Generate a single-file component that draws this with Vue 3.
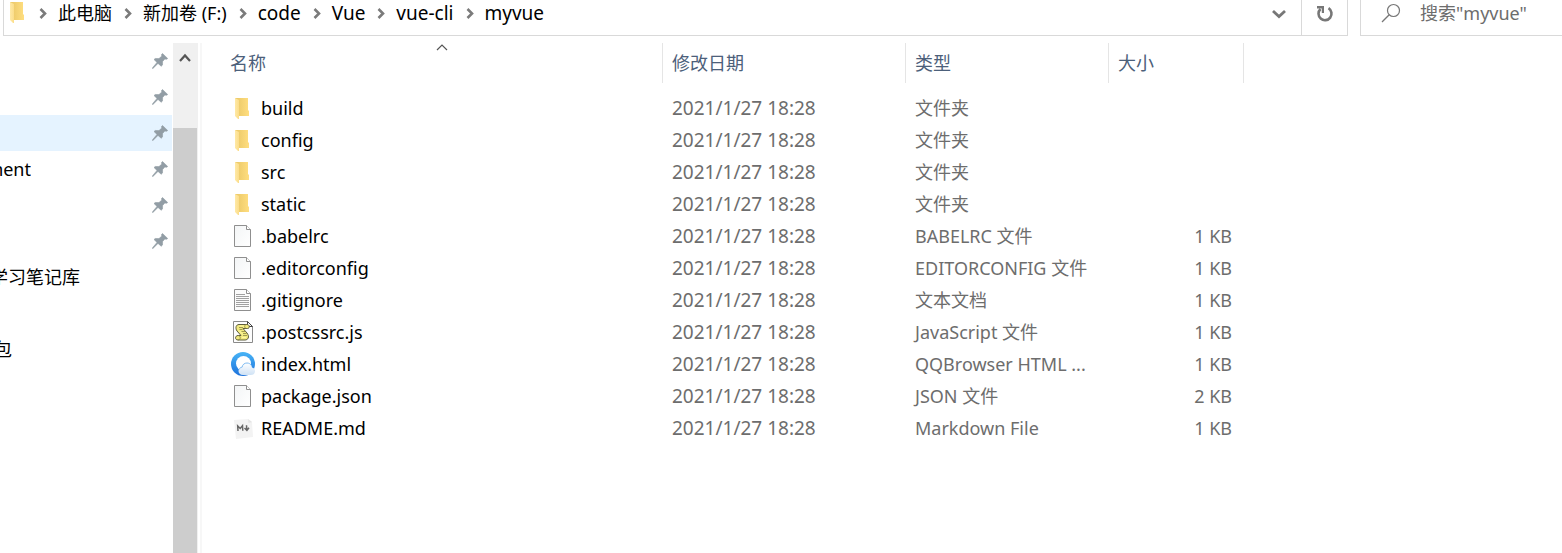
<script setup>
const crumbs = ['此电脑', '新加卷 (F:)', 'code', 'Vue', 'vue-cli', 'myvue']
const isLatin = (text) => /^[a-z-]+$/i.test(text)

const shortcuts = [
  { pinned: true },
  { pinned: true },
  { pinned: true, active: true },
  { label: 'ment', pinned: true, end: 'end-short' },
  { pinned: true },
  { pinned: true },
  { label: '学习笔记库', end: 'end-long' },
  {},
  { label: '包', end: 'end-tiny' },
]

const date = '2021/1/27 18:28'
const files = [
  { name: 'build', icon: 'folder', type: '文件夹', size: '' },
  { name: 'config', icon: 'folder', type: '文件夹', size: '' },
  { name: 'src', icon: 'folder', type: '文件夹', size: '' },
  { name: 'static', icon: 'folder', type: '文件夹', size: '' },
  { name: '.babelrc', icon: 'file', type: 'BABELRC 文件', size: '1 KB' },
  { name: '.editorconfig', icon: 'file', type: 'EDITORCONFIG 文件', size: '1 KB' },
  { name: '.gitignore', icon: 'text', type: '文本文档', size: '1 KB' },
  { name: '.postcssrc.js', icon: 'script', type: 'JavaScript 文件', size: '1 KB' },
  { name: 'index.html', icon: 'browser', type: 'QQBrowser HTML ...', size: '1 KB' },
  { name: 'package.json', icon: 'file', type: 'JSON 文件', size: '2 KB' },
  { name: 'README.md', icon: 'markdown', type: 'Markdown File', size: '1 KB' },
]
</script>

<template>
  <div class="explorer">
    <svg class="defs" width="0" height="0" aria-hidden="true">
      <defs>
        <linearGradient id="flap" x1="0" x2="1"><stop offset="0" stop-color="#ffe9a6" /><stop offset="1" stop-color="#fbdd8a" /></linearGradient>
        <linearGradient id="back" x1="0" x2="1"><stop offset="0" stop-color="#e9c665" /><stop offset="1" stop-color="#ffde80" /></linearGradient>
        <linearGradient id="paper" x1="0" y1="0" x2="1" y2="1"><stop offset="0" stop-color="#f3f5f6" /><stop offset="1" stop-color="#ffffff" /></linearGradient>
        <linearGradient id="ring" x1="0" y1="0" x2="0" y2="1"><stop offset="0" stop-color="#48b4f6" /><stop offset="1" stop-color="#1d72dc" /></linearGradient>
        <linearGradient id="cloud" x1="0" y1="0" x2="0" y2="1"><stop offset="0" stop-color="#ffffff" /><stop offset="1" stop-color="#cfe2f5" /></linearGradient>
        <symbol id="i-folder" viewBox="0 0 24 24">
          <path d="M4 2h13v12l1 1v5H7z" fill="url(#back)" />
          <path d="M4 2l4 2v19l-1 0-3-3z" fill="url(#flap)" />
        </symbol>
        <symbol id="i-file" viewBox="0 0 24 24">
          <path d="M3.500 1.500h12l4 4v17h-16z" fill="url(#paper)" stroke="#8f8f8f" />
          <path d="M15.500 1.500v4h4" fill="#fff" stroke="#8f8f8f" />
        </symbol>
        <symbol id="i-text" viewBox="0 0 24 24">
          <path d="M3.500 1.500h12l4 4v17h-16z" fill="#fbfbfb" stroke="#8f8f8f" />
          <path d="M15.500 1.500v4h4" fill="#fff" stroke="#8f8f8f" />
          <path d="M5 6.500h9M5 8.500h13M5 10.500h13M5 12.500h13M5 14.500h13M5 16.500h13M5 18.500h13" stroke="#a0a0a0" />
        </symbol>
        <symbol id="i-script" viewBox="0 0 24 24">
          <path d="M2.500 1.500h14l5 5v16h-19z" fill="#fdfdfd" stroke="#8a8a8a" />
          <path d="M16.500 1.500v5h5z" fill="#fff" stroke="#444" />
          <path d="M8 4.500h8c3 0 3 4 .5 4h-4.500l4 4.500c3 4 1 7-2 7H7c-3.500 0-3-4.500 0-4.500h3l-4-4.500c-2-3-1-6.500 2-6.500z" fill="#f2ea80" stroke="#5d5c3c" />
          <path d="M16 4.500c-3-.5-3 4-.5 4M7 15.500c3 0 3 4.500 0 4.500M8 7.500h4M8.500 9.500h3M10.500 11.500h4M12 13.500h3.500M12 15.500h4" fill="none" stroke="#8a8742" stroke-width=".8" />
          <path d="M8.500 6h4M11 17.500h4M8 10.500l4 4" stroke="#fff8a1" />
        </symbol>
        <symbol id="i-browser" viewBox="0 0 24 24">
          <circle cx="12" cy="12" r="12" fill="url(#ring)" />
          <circle cx="12.500" cy="11.500" r="7.500" fill="#fff" />
          <path d="M12 23c-3 0-4.500-1.800-4.500-4 0-2 1.600-3.700 3.600-3.800C11.500 12.500 13.500 11 16 11c2.700 0 4.600 1.800 5 4.400 2 .4 3.200 2 3 4-.2 2.200-2 3.600-4.200 3.600z" fill="url(#cloud)" />
          <path d="M8 17.500c.6-1.400 1.700-2.200 3.100-2.300C11.500 12.500 13.500 11 16 11c2 0 3.700 1 4.500 2.700" fill="none" stroke="#7fbcf2" />
        </symbol>
        <symbol id="i-markdown" viewBox="0 0 24 24">
          <path d="M3 4l14-1 4 3 1 15-17 2z" fill="#f3f3f3" />
          <path d="M17 3l.5 4 3.500-1z" fill="#e4e4e4" />
          <path d="M7 15l-.3-5 2.500 2.500L11.500 9.700l.3 5" fill="none" stroke="#666" stroke-width="1.500" />
          <path d="M15.500 9.300l.3 4.500M13.500 12l2.400 2.300L18 11.700" fill="none" stroke="#666" stroke-width="1.500" />
        </symbol>
        <symbol id="i-pin" viewBox="0 0 16 16">
          <path d="M10.500 0.500L15.700 5.500L14.500 6.300L12.800 6L10.600 8.500L10.500 12L9.200 13.300L6 10.400L1.200 15.200L0.400 15.500L.6 14.700L5 9.400L2 6.500L3.300 5.500L7 5.600L9.800 3L9.500 1.500z" fill="#929da5" stroke="#929da5" stroke-width=".6" />
        </symbol>
      </defs>
    </svg>

    <header class="toolbar">
      <div class="address">
        <svg class="lead-folder" viewBox="0 0 24 24" aria-hidden="true"><use href="#i-folder" /></svg>
        <nav class="crumbs" aria-label="路径">
          <template v-for="crumb in crumbs" :key="crumb">
            <svg class="sep" viewBox="0 0 8 11" aria-hidden="true"><path d="M1.500 1l4.500 4.500-4.500 4.500" fill="none" stroke="#7b7b7b" stroke-width="2.600" /></svg>
            <button class="crumb" :class="{ latin: isLatin(crumb) }" type="button">{{ crumb }}</button>
          </template>
        </nav>
        <button class="history" type="button" aria-label="历史记录">
          <svg width="14" height="10" viewBox="0 0 14 10"><path d="M1 2l6 5.500L13 2" fill="none" stroke="#777" stroke-width="2.800" /></svg>
        </button>
        <button class="refresh" type="button" aria-label="刷新">
          <svg width="18" height="18" viewBox="0 0 18 18">
            <path d="M12.500 3.200A6.500 6.500 0 1 1 4.500 4" fill="none" stroke="#777" stroke-width="2.600" />
            <path d="M1 1h7v7H5.800V3.500H1z" fill="#777" />
          </svg>
        </button>
      </div>
      <label class="search">
        <svg width="20" height="20" viewBox="0 0 20 20" aria-hidden="true"><circle cx="12.500" cy="7.500" r="6" fill="none" stroke="#777" stroke-width="1.200" /><path d="M8.200 11.800L1 19" stroke="#777" stroke-width="1.300" /></svg>
        <input type="text" aria-label="搜索" placeholder='搜索"myvue"' />
      </label>
    </header>

    <div class="body">
      <aside class="sidebar">
        <ul class="shortcuts">
          <li v-for="(item, i) in shortcuts" :key="i" :class="{ active: item.active }">
            <span v-if="item.label" class="shortcut" :class="item.end">{{ item.label }}</span>
            <svg v-if="item.pinned" class="pin" viewBox="0 0 16 16" aria-hidden="true"><use href="#i-pin" /></svg>
          </li>
        </ul>
      </aside>
      <div class="scrollbar">
        <button class="scroll-up" type="button" aria-label="向上滚动">
          <svg width="12" height="10" viewBox="0 0 12 10"><path d="M1 8l5-5.500L11 8" fill="none" stroke="#555" stroke-width="2.200" /></svg>
        </button>
        <div class="thumb"></div>
      </div>

      <main class="listing">
        <table>
          <colgroup>
            <col class="c-name" /><col class="c-date" /><col class="c-type" /><col class="c-size" /><col />
          </colgroup>
          <thead>
            <tr>
              <th class="name-head">
                <svg class="sort" width="12" height="7" viewBox="0 0 12 7" aria-hidden="true"><path d="M1 6l5-5 5 5" fill="none" stroke="#555" stroke-width="1.200" /></svg>
                <button type="button">名称</button>
              </th>
              <th><button type="button">修改日期</button></th>
              <th><button type="button">类型</button></th>
              <th><button type="button">大小</button></th>
              <th></th>
            </tr>
          </thead>
          <tbody>
            <tr v-for="file in files" :key="file.name">
              <td class="name">
                <div class="name-box">
                  <svg class="icon" viewBox="0 0 24 24" aria-hidden="true"><use :href="'#i-' + file.icon" /></svg>
                  <span>{{ file.name }}</span>
                </div>
              </td>
              <td class="date">{{ date }}</td>
              <td>{{ file.type }}</td>
              <td class="size">{{ file.size }}</td>
              <td></td>
            </tr>
          </tbody>
        </table>
      </main>
    </div>
  </div>
</template>

<style>
body {
  background: #fff;
}
</style>

<style scoped>
.explorer {
  display: flex;
  flex-direction: column;
  min-height: 100vh;
  font-family: "Noto Sans", "Noto Sans CJK SC", sans-serif;
  font-size: 18px;
  line-height: 26px;
  color: #000;
}
.defs {
  position: absolute;
}
button {
  font: inherit;
  color: inherit;
  background: none;
  border: 0;
  padding: 0;
}
.toolbar {
  display: flex;
  gap: 12px;
  padding-left: 3px;
}
.address {
  box-sizing: border-box;
  flex: 1;
  display: flex;
  height: 36px;
  border: 1px solid #d9d9d9;
  border-top: 0;
}
.lead-folder {
  width: 24px;
  height: 24px;
  margin-left: 2px;
}
.crumbs {
  flex: 1;
  display: flex;
  height: 26px;
  align-items: center;
  padding-left: 4px;
}
.sep {
  width: 8px;
  height: 11px;
  margin: 0 11px 0 5px;
}
.crumb {
  margin-right: 7px;
  white-space: nowrap;
}
.latin,
.date {
  font-size: 19px;
}
.history,
.refresh {
  display: flex;
  align-items: center;
  justify-content: center;
  width: 45px;
  padding-bottom: 8px;
}
.refresh {
  box-sizing: border-box;
  width: 46px;
  border-left: 1px solid #d9d9d9;
}
.search {
  box-sizing: border-box;
  display: flex;
  width: 202px;
  height: 36px;
  padding-left: 20px;
  gap: 19px;
  border: 1px solid #d9d9d9;
  border-width: 0 0 1px 1px;
}
.search svg {
  flex: none;
  margin-top: 3px;
}
.search input {
  flex: 1;
  min-width: 0;
  height: 26px;
  padding: 0;
  border: 0;
  outline: 0;
  background: none;
  font: inherit;
}
.search input::placeholder {
  color: #6d6d6d;
  opacity: 1;
}
.body {
  flex: 1;
  display: flex;
  padding-top: 7px;
}
.sidebar {
  width: 172px;
  margin-right: 1px;
}
.shortcuts {
  margin: 0;
  padding: 0;
  list-style: none;
}
.shortcuts li {
  display: flex;
  align-items: center;
  height: 36px;
  padding-right: 4px;
}
.shortcuts .active {
  background: #e5f3ff;
}
.shortcut {
  display: flex;
  justify-content: flex-end;
  overflow: hidden;
  white-space: nowrap;
}
.end-tiny {
  width: 12px;
}
.end-short {
  width: 31px;
}
.end-long {
  width: 80px;
}
.pin {
  width: 16px;
  height: 16px;
  margin-left: auto;
}
.scrollbar {
  display: flex;
  flex-direction: column;
  width: 24px;
  border-right: 1px solid #f0f0f0;
  background: #f0f0f0;
}
.scroll-up {
  display: flex;
  justify-content: center;
  height: 85px;
  padding-top: 10px;
}
.thumb {
  flex: 1;
  background: #cdcdcd;
}
.listing {
  flex: 1;
  min-width: 0;
  margin-left: 2px;
  border-left: 2px solid #f7f7f7;
}
table {
  width: 100%;
  table-layout: fixed;
  border-collapse: separate;
  border-spacing: 0;
}
.c-name {
  width: 460px;
}
.c-date {
  width: 243px;
}
.c-type {
  width: 203px;
}
.c-size {
  width: 135px;
}
th {
  position: relative;
  box-sizing: border-box;
  height: 40px;
  padding: 0 0 0 9px;
  border-left: 1px solid #e5e5e5;
  text-align: left;
  font-weight: 400;
  color: #4c607a;
}
.name-head {
  padding-left: 28px;
  border-left: 0;
}
.sort {
  position: absolute;
  top: 1px;
  left: 234px;
}
tbody::before {
  content: "";
  display: block;
  height: 9px;
}
td {
  box-sizing: border-box;
  height: 32px;
  padding: 0 0 0 10px;
  color: #6d6d6d;
  white-space: nowrap;
}
.name {
  padding-left: 29px;
  color: #000;
}
.name-box {
  display: flex;
  align-items: center;
  gap: 6px;
}
.icon {
  flex: none;
  width: 24px;
  height: 24px;
}
.size {
  padding-right: 11px;
  text-align: right;
}
</style>
